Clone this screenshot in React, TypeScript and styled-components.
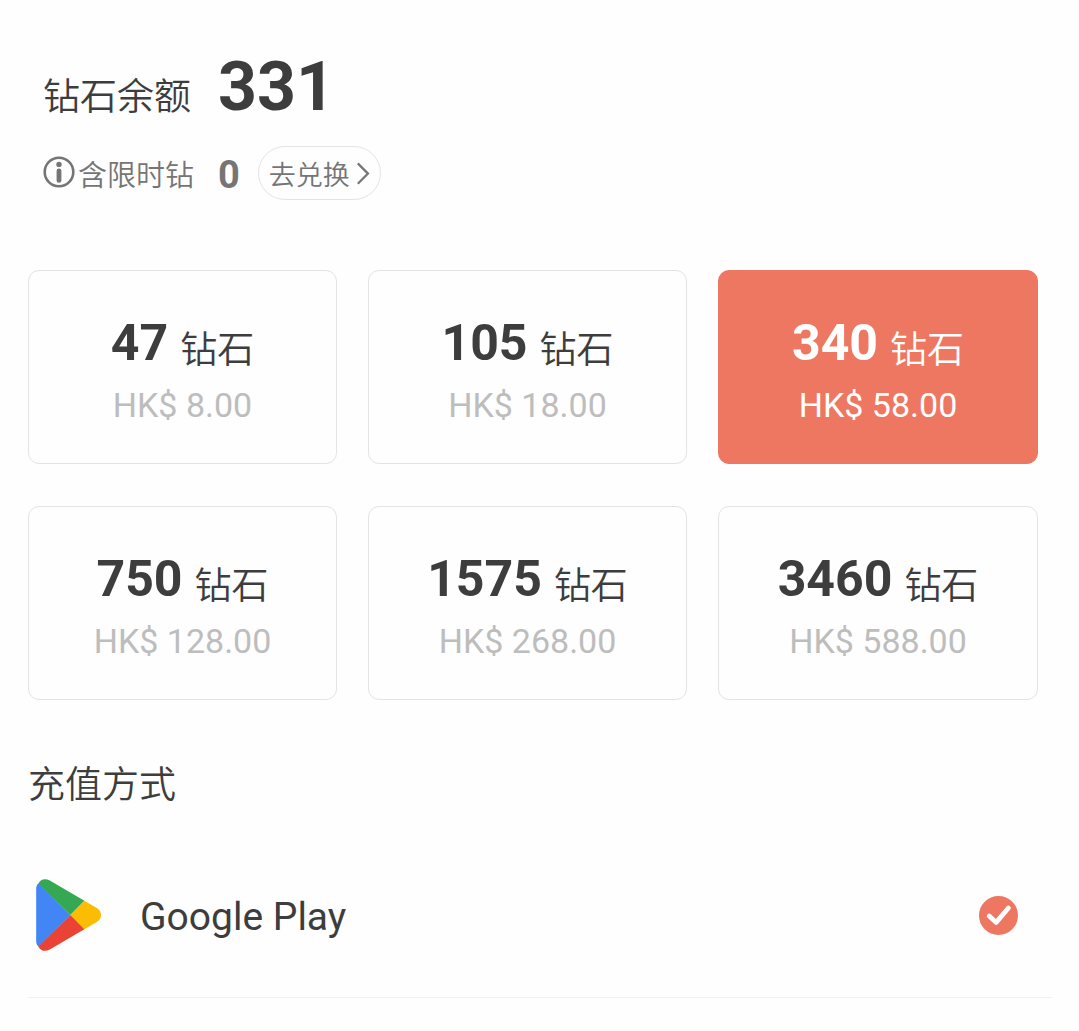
import React, { useState } from 'react';
import styled, { createGlobalStyle } from 'styled-components';

const GlobalStyle = createGlobalStyle`
  * {
    box-sizing: border-box;
  }

  body {
    margin: 0;
    background-color: #fefefe;
    color: #3d3d3d;
    font-family: Roboto, 'Noto Sans CJK SC', sans-serif;
  }

  button {
    font-family: inherit;
    cursor: pointer;
  }
`;

const Page = styled.main`
  padding: 47px 27px 33px 28px;
`;

const Balance = styled.header`
  padding-left: 15px;
`;

const BalanceRow = styled.div`
  display: flex;
  align-items: baseline;
  gap: 27px;
  line-height: 80px;
`;

const BalanceLabel = styled.h1`
  margin: 0;
  font-size: 37px;
  font-weight: 350;
  line-height: 48px;
`;

const BalanceValue = styled.span`
  font-size: 68px;
  font-weight: 700;
`;

const LimitedRow = styled.div`
  display: flex;
  align-items: center;
  margin-top: 19px;
  color: #757575;
`;

const LimitedLabel = styled.span`
  margin: 0 24px 0 3px;
  padding-top: 6px;
  font-size: 29px;
  font-weight: 350;
  line-height: 40px;
`;

const LimitedValue = styled.span`
  margin-right: 18px;
  padding-top: 3px;
  font-size: 38px;
  font-weight: 700;
  line-height: 48px;
`;

const ExchangeButton = styled.button`
  display: flex;
  align-items: center;
  gap: 6px;
  height: 54px;
  padding: 0 10px;
  border: 1px solid #e4e4e4;
  border-radius: 27px;
  background-color: transparent;
  color: #757575;
  font-size: 27px;
  font-weight: 350;
  line-height: 40px;
`;

const ExchangeText = styled.span`
  padding-top: 6px;
`;

const PackageGrid = styled.section`
  display: grid;
  grid-template-columns: 309fr 319fr 320fr;
  gap: 42px 31px;
  margin: 70px 14px 0 0;
`;

const PackageCard = styled.button<{ $selected: boolean }>`
  min-height: 194px;
  padding: 42px 0 38px;
  border: 1px solid ${props => props.$selected ? '#ee7762' : '#e4e4e4'};
  border-radius: 11px;
  background-color: ${props => props.$selected ? '#ee7762' : 'transparent'};
  color: ${props => props.$selected ? 'white' : '#3d3d3d'};
`;

const PackageAmount = styled.div`
  display: flex;
  align-items: flex-end;
  justify-content: center;
  gap: 12px;
  font-size: 50px;
  font-weight: 700;
  line-height: 60px;
`;

const PackageUnit = styled.span`
  font-size: 37px;
  font-weight: 350;
  line-height: 44px;
`;

const PackagePrice = styled.div<{ $selected: boolean }>`
  margin-top: 12px;
  color: ${props => props.$selected ? 'white' : '#bdbdbd'};
  font-size: 34px;
  line-height: 40px;
`;

const SectionTitle = styled.h2`
  margin: 62px 0 23px;
  font-size: 37px;
  font-weight: 350;
  line-height: 48px;
`;

const MethodRow = styled.label`
  display: flex;
  align-items: center;
  height: 165px;
  padding: 0 34px 0 8px;
  border-bottom: 1px solid #f0f0f0;
  cursor: pointer;
`;

const MethodName = styled.span`
  flex: 1;
  margin-left: 38px;
  padding-top: 3px;
  font-size: 39px;
  line-height: 48px;
`;

const RadioBox = styled.span`
  display: grid;
  place-items: center;

  > * {
    grid-area: 1 / 1;
  }

  svg {
    pointer-events: none;
  }
`;

const Radio = styled.input`
  appearance: none;
  width: 39px;
  height: 39px;
  margin: 0;
  border: 2px solid #d8d8d8;
  border-radius: 50%;
  cursor: pointer;

  &:checked {
    border-color: #ee7762;
    background-color: #ee7762;
  }
`;

const InfoIcon = () => (
  <svg width="32" height="34" viewBox="0 0 32 34" aria-hidden="true">
    <circle cx="16" cy="16" r="14.3" fill="none" stroke="currentColor" strokeWidth="2.6" />
    <circle cx="16" cy="8.4" r="2.7" fill="currentColor" />
    <path d="M16 14.8v9.6" stroke="currentColor" strokeWidth="4.8" strokeLinecap="round" />
  </svg>
);

const ChevronIcon = () => (
  <svg width="14" height="24" viewBox="0 0 14 24" fill="none" aria-hidden="true">
    <path d="M1.8 2.4L12 12.6L1.8 22.8" stroke="currentColor" strokeWidth="2.2" />
  </svg>
);

const GooglePlayLogo = () => (
  <svg width="66" height="72" viewBox="0 0 66 72" aria-hidden="true">
    <path fill="#4285f4" d="M2.8 4.2C1.1 5.6.2 7.2.2 9.2v53.6c0 2 .9 3.6 2.6 5L34.4 36z" />
    <path fill="#34a853" d="M2.4 4.6C4.6-.2 9.4-.8 13.8 1.5L48.4 21.8L34.4 36z" />
    <path fill="#fbbc04" d="M48.4 21.8L60.4 28.8c6.2 3.8 6.2 10.6 0 14.4L48.4 50.2L34.4 36z" />
    <path fill="#ea4335" d="M2.4 67.4C4.6 72.2 9.4 72.8 13.8 70.5L48.4 50.2L34.4 36z" />
  </svg>
);

const CheckIcon = () => (
  <svg width="39" height="39" viewBox="0 0 39 39" fill="none" aria-hidden="true">
    <path
      d="M10.2 20L17.2 26.4L29.4 12"
      stroke="white"
      strokeWidth="4.8"
      strokeLinecap="round"
      strokeLinejoin="round"
    />
  </svg>
);

const packages = [
  { amount: 47, price: '8.00' },
  { amount: 105, price: '18.00' },
  { amount: 340, price: '58.00' },
  { amount: 750, price: '128.00' },
  { amount: 1575, price: '268.00' },
  { amount: 3460, price: '588.00' },
];

const App: React.FC = () => {
  const [selected, setSelected] = useState(340);

  return (
    <Page>
      <GlobalStyle />
      <Balance>
        <BalanceRow>
          <BalanceLabel>钻石余额</BalanceLabel>
          <BalanceValue>331</BalanceValue>
        </BalanceRow>
        <LimitedRow>
          <InfoIcon />
          <LimitedLabel>含限时钻</LimitedLabel>
          <LimitedValue>0</LimitedValue>
          <ExchangeButton type="button">
            <ExchangeText>去兑换</ExchangeText>
            <ChevronIcon />
          </ExchangeButton>
        </LimitedRow>
      </Balance>

      <PackageGrid>
        {packages.map(({ amount, price }) => (
          <PackageCard
            key={amount}
            type="button"
            $selected={amount === selected}
            aria-pressed={amount === selected}
            onClick={() => setSelected(amount)}
          >
            <PackageAmount>
              {amount}
              <PackageUnit>钻石</PackageUnit>
            </PackageAmount>
            <PackagePrice $selected={amount === selected}>HK$ {price}</PackagePrice>
          </PackageCard>
        ))}
      </PackageGrid>

      <SectionTitle>充值方式</SectionTitle>
      <MethodRow>
        <GooglePlayLogo />
        <MethodName>Google Play</MethodName>
        <RadioBox>
          <Radio type="radio" name="method" value="google-play" defaultChecked />
          <CheckIcon />
        </RadioBox>
      </MethodRow>
    </Page>
  );
};

export default App;
